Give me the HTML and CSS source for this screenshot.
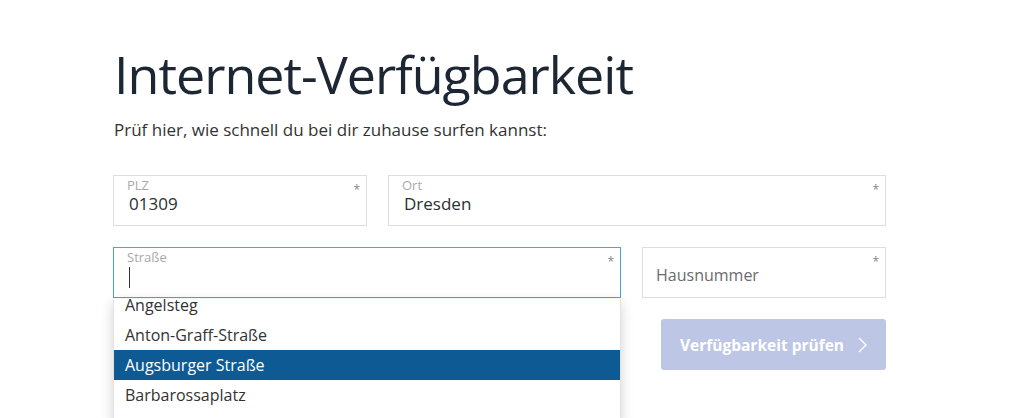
FILE: index.html
```html
<!DOCTYPE html>
<html lang="de">
<head>
    <meta charset="UTF-8">
    <meta name="viewport" content="width=device-width, initial-scale=1.0">
    <title>Internet-Verfügbarkeit</title>
    <link rel="stylesheet" href="styles.css">
</head>
<body>
    <main class="availability">
        <h1>Internet-Verfügbarkeit</h1>
        <p class="intro">Prüf hier, wie schnell du bei dir zuhause surfen kannst:</p>

        <form class="address-form">
            <div class="form-row row-top">
                <label class="field">
                    <span class="field-label">PLZ</span>
                    <span class="field-value">01309</span>
                    <span class="required">*</span>
                </label>
                <label class="field">
                    <span class="field-label">Ort</span>
                    <span class="field-value">Dresden</span>
                    <span class="required">*</span>
                </label>
            </div>

            <div class="form-row row-bottom">
                <div class="street-wrap">
                    <label class="field is-focused">
                        <span class="field-label">Straße</span>
                        <span class="field-value"><span class="caret"></span></span>
                        <span class="required">*</span>
                    </label>

                    <!-- Autocomplete list -->
                    <div class="suggestions">
                        <ul class="suggestion-list">
                            <li>Angelsteg</li>
                            <li>Anton-Graff-Straße</li>
                            <li class="active">Augsburger Straße</li>
                            <li>Barbarossaplatz</li>
                        </ul>
                    </div>
                </div>
                <div class="right-col">
                    <label class="field field-empty">
                        <span class="placeholder">Hausnummer</span>
                        <span class="required">*</span>
                    </label>
                    <button type="button" class="check-btn" disabled>
                        Verfügbarkeit prüfen
                        <svg class="chevron" width="9" height="16" viewBox="0 0 9 16">
                            <path d="M1 1l7 7-7 7" fill="none" stroke="#fff" stroke-width="1.4"/>
                        </svg>
                    </button>
                </div>
            </div>
        </form>
    </main>
</body>
</html>
```

FILE: styles.css
```css
/* Base */
body {
    margin: 0;
    font-family: 'Open Sans', 'Lato', sans-serif;
    background: #fff;
    color: #333;
    overflow: hidden;
}

.availability {
    width: 886px;
    height: 418px;
    padding: 38px 0 0 113px;
    box-sizing: border-box;
    overflow: hidden;
}

h1 {
    margin: 0 0 0 1px;
    font-size: 52px;
    font-weight: 400;
    color: #1c2733;
    line-height: 72px;
    letter-spacing: -1px;
}

.intro {
    margin: 8px 0 0 1px;
    font-size: 17px;
    line-height: 24px;
    color: #333;
}

/* Form rows */
.address-form {
    margin-top: 33px;
}

.form-row {
    display: grid;
    column-gap: 21px;
}

.row-top {
    grid-template-columns: 254px 1fr;
    margin-bottom: 21px;
}

.row-bottom {
    grid-template-columns: 508px 1fr;
    align-items: start;
}

/* Field */
.field {
    position: relative;
    display: flex;
    flex-direction: column;
    height: 51px;
    box-sizing: border-box;
    padding: 1px 14px 0 13px;
    border: 1px solid #dcdfe2;
    background: #fff;
}

.field-label {
    font-size: 13px;
    line-height: 16px;
    color: #a9a9a9;
}

.field-value {
    font-size: 17px;
    line-height: 21px;
    color: #2a2f36;
    padding-left: 2px;
}

.required {
    position: absolute;
    top: 5px;
    right: 6px;
    font-size: 12px;
    color: #888;
}

.field.is-focused {
    border-color: #4aa5dc;
}

.caret {
    display: inline-block;
    width: 1px;
    height: 21px;
    margin-top: 2px;
    background: #333;
}

.field-empty {
    justify-content: center;
    padding-top: 4px;
}

.placeholder {
    font-size: 16px;
    color: #6b6b6b;
}

/* Autocomplete */
.street-wrap {
    position: relative;
}

.suggestions {
    position: absolute;
    top: 52px;
    left: 0;
    right: 0;
    height: 125px;
    overflow: hidden;
    background: #fff;
    border: 1px solid #e2e2e2;
    border-top: none;
    box-sizing: border-box;
    box-shadow: 0 4px 12px rgba(0,0,0,0.18);
    z-index: 2;
}

.suggestion-list {
    list-style: none;
    margin: -9px 0 0;
    padding: 0;
}

.suggestion-list li {
    height: 30px;
    line-height: 30px;
    padding-left: 11px;
    font-size: 16px;
    color: #333;
}

.suggestion-list li.active {
    background: #0d5a94;
    color: #fff;
}

/* Right column */
.right-col {
    display: flex;
    flex-direction: column;
    align-items: flex-end;
    gap: 21px;
}

.right-col .field {
    width: 100%;
}

.check-btn {
    display: flex;
    align-items: center;
    justify-content: center;
    gap: 14px;
    width: 225px;
    height: 51px;
    border: none;
    border-radius: 3px;
    background: #bec6e6;
    color: #fff;
    font-family: inherit;
    font-size: 15.5px;
    font-weight: 700;
}
```
